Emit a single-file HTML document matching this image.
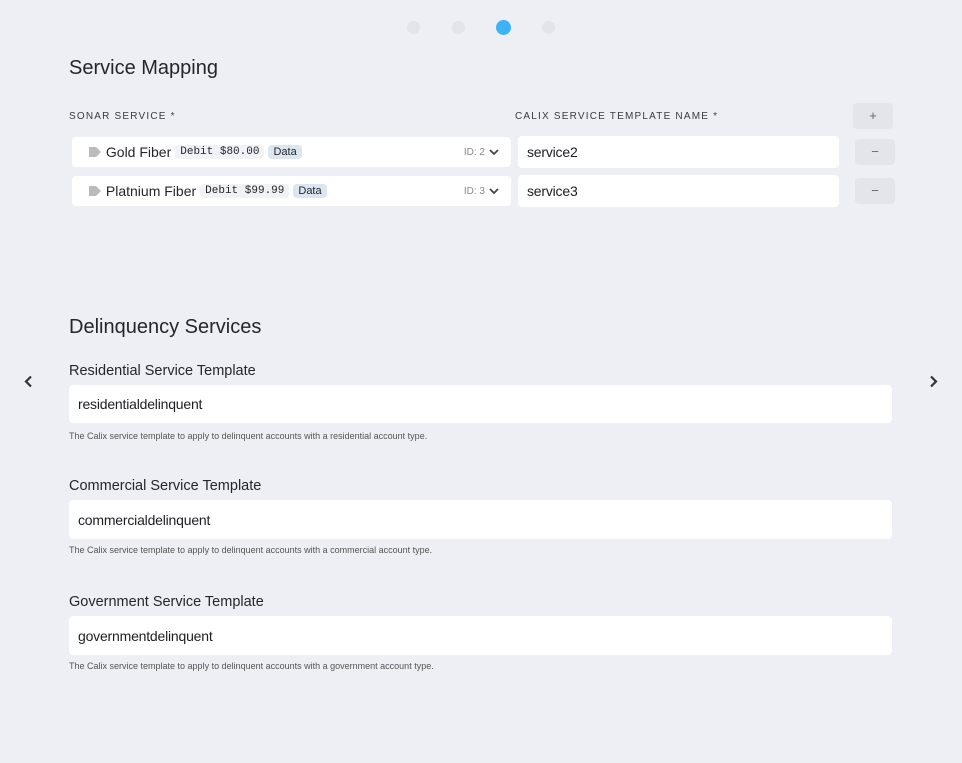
<!DOCTYPE html>
<html><head><meta charset="utf-8"><style>
*{box-sizing:border-box;margin:0;padding:0}
body{width:962px;height:763px;background:#eeeff4;font-family:"Liberation Sans",sans-serif;color:#25262b;position:relative;overflow:hidden}
.a{position:absolute}
.dot{position:absolute;top:21px;width:13px;height:13px;border-radius:50%;background:#e3e4ea}
h2{position:absolute;left:69px;font-size:20px;font-weight:normal;color:#25262b}
.lab{position:absolute;font-size:10px;letter-spacing:1.2px;color:#3a3b40}
.box{position:absolute;background:#fff;border-radius:4px}
.inp{font-size:14px;padding-left:9px;display:flex;align-items:center;color:#1d1e22;letter-spacing:-0.2px}
.tag{display:inline-block;font-size:11px;padding:1px 5px;border-radius:4px;margin-left:4px;vertical-align:1px}
.btn{position:absolute;background:#e4e5eb;border-radius:4px;width:40px;height:26px;text-align:center;line-height:26px;color:#666;font-size:13px}
.fl{position:absolute;left:69px;font-size:14.5px;color:#25262b}
.help{position:absolute;left:69px;font-size:9px;color:#555}
.row{display:flex;align-items:center;padding-left:16px;font-size:14px}
.idl{position:absolute;right:12px;top:10px;font-size:10px;color:#888;display:flex;align-items:center;gap:4px}
</style></head><body>
<div class="dot" style="left:407px"></div><div class="dot" style="left:452px"></div>
<div class="dot" style="left:496px;top:20px;width:15px;height:15px;background:#3eb2f4"></div><div class="dot" style="left:542px"></div>
<h2 style="top:57px">Service Mapping</h2>
<div class="lab" style="left:69px;top:111px">SONAR SERVICE *</div>
<div class="lab" style="left:515px;top:111px">CALIX SERVICE TEMPLATE NAME *</div>
<div class="btn" style="left:853px;top:103px">+</div>
<div class="box row" style="left:72px;top:137px;width:439px;height:30px">
<svg width="14" height="12" viewBox="0 0 14 12"><path d="M1 1h7l5 5-5 5H1z" fill="#bbb"/></svg>&nbsp;Gold Fiber<span class="tag" style="background:#f1f2f5;font-family:'Liberation Mono',monospace">Debit $80.00</span><span class="tag" style="background:#dbe6f0">Data</span>
<span class="idl">ID: 2 <svg width="10" height="7" viewBox="0 0 10 7"><path d="M1 1l4 4 4-4" stroke="#444" stroke-width="1.8" fill="none"/></svg></span></div>
<div class="box row" style="left:72px;top:176px;width:439px;height:30px">
<svg width="14" height="12" viewBox="0 0 14 12"><path d="M1 1h7l5 5-5 5H1z" fill="#bbb"/></svg>&nbsp;Platnium Fiber<span class="tag" style="background:#f1f2f5;font-family:'Liberation Mono',monospace">Debit $99.99</span><span class="tag" style="background:#dbe6f0">Data</span>
<span class="idl">ID: 3 <svg width="10" height="7" viewBox="0 0 10 7"><path d="M1 1l4 4 4-4" stroke="#444" stroke-width="1.8" fill="none"/></svg></span></div>
<div class="box inp" style="left:518px;top:136px;width:321px;height:32px">service2</div>
<div class="box inp" style="left:518px;top:175px;width:321px;height:32px">service3</div>
<div class="btn" style="left:855px;top:139px">&minus;</div>
<div class="btn" style="left:855px;top:178px">&minus;</div>
<h2 style="top:316px">Delinquency Services</h2>
<svg class="a" style="left:23px;top:375px" width="10" height="13" viewBox="0 0 10 13"><path d="M8 1.5L3 6.5l5 5" stroke="#333" stroke-width="2.2" fill="none"/></svg>
<svg class="a" style="left:929px;top:375px" width="10" height="13" viewBox="0 0 10 13"><path d="M2 1.5l5 5-5 5" stroke="#333" stroke-width="2.2" fill="none"/></svg>
<div class="fl" style="top:363px">Residential Service Template</div>
<div class="box inp" style="left:69px;top:385px;width:823px;height:38px">residentialdelinquent</div>
<div class="help" style="top:431px">The Calix service template to apply to delinquent accounts with a residential account type.</div>
<div class="fl" style="top:478px">Commercial Service Template</div>
<div class="box inp" style="left:69px;top:500px;width:823px;height:39px">commercialdelinquent</div>
<div class="help" style="top:545px">The Calix service template to apply to delinquent accounts with a commercial account type.</div>
<div class="fl" style="top:594px">Government Service Template</div>
<div class="box inp" style="left:69px;top:616px;width:823px;height:39px">governmentdelinquent</div>
<div class="help" style="top:661px">The Calix service template to apply to delinquent accounts with a government account type.</div>
</body></html>
